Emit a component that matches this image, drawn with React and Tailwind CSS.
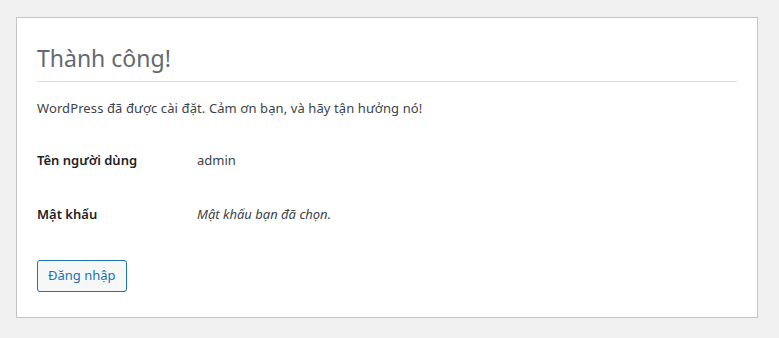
import React from 'react';

function InfoRow({ label, children }) {
  return (
    <div className="flex items-center h-[54px]">
      <div className="w-[160px] font-semibold text-[#1d2327]">{label}</div>
      <div className="text-[#3c434a]">{children}</div>
    </div>
  );
}

export default function App() {
  return (
    <div
      className="min-h-screen bg-[#f0f0f1] pt-[17px] pl-[16px] pr-[21px] text-[13px]"
      style={{ fontFamily: '"Noto Sans", "Open Sans", sans-serif' }}
    >
      <div className="bg-white border border-[#c3c4c7] h-[301px] px-[20px]">
        {/* Heading */}
        <h1 className="mt-[25px] pb-[7px] border-b border-[#dcdcde] text-[23px] leading-[31px] text-[#646970] font-normal">
          Thành công!
        </h1>

        <p className="mt-[17px] leading-[19px] text-[#3c434a] tracking-[0.1px]">
          WordPress đã được cài đặt. Cảm ơn bạn, và hãy tận hưởng nó!
        </p>

        {/* Account details */}
        <div className="mt-[16px]">
          <InfoRow label="Tên người dùng">admin</InfoRow>
          <InfoRow label="Mật khẩu">
            <span className="italic">Mật khẩu bạn đã chọn.</span>
          </InfoRow>
        </div>

        <button className="mt-[18px] h-[32px] px-[10px] rounded-[3px] border border-[#2271b1] bg-[#f6f7f7] text-[#2271b1] text-[13px]">
          Đăng nhập
        </button>
      </div>
    </div>
  );
}
